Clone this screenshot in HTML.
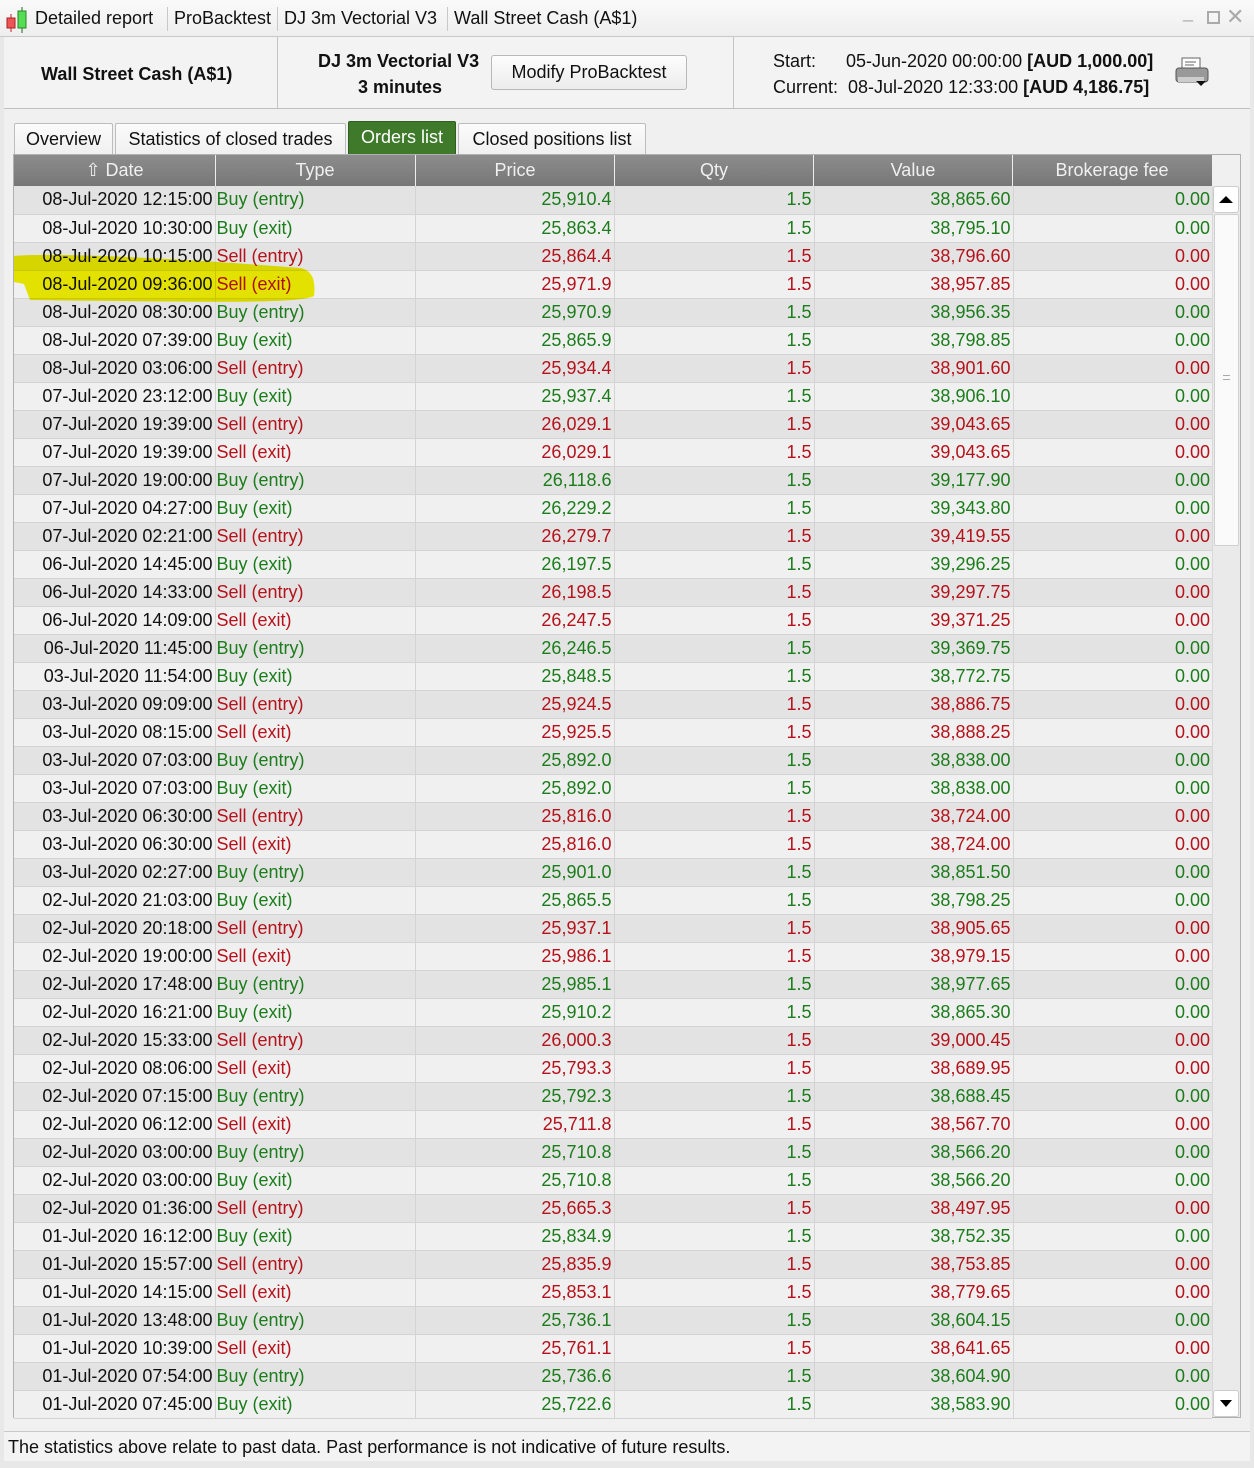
<!DOCTYPE html>
<html><head><meta charset="utf-8"><style>
*{margin:0;padding:0;box-sizing:border-box}
body{width:1254px;height:1468px;overflow:hidden;background:#e8e8e8;font-family:"Liberation Sans",sans-serif;font-size:18px;color:#111;position:relative}
.title{position:absolute;left:0;top:0;width:1254px;height:37px;background:linear-gradient(#fafafa,#eeeeee);border-bottom:1px solid #c8c8c8}
.title span{position:absolute;top:8px;font-size:18px}
.sep{position:absolute;top:7px;width:1px;height:24px;background:#c8c8c8}
.info{position:absolute;left:4px;top:37px;width:1246px;height:72px;background:#f3f3f3;border-bottom:1px solid #c0c0c0}
.vd{position:absolute;top:0;width:1px;height:71px;background:#c4c4c4}
.btn{position:absolute;left:491px;top:55px;width:196px;height:35px;border:1px solid #b8b8b8;border-radius:3px;background:linear-gradient(#fdfdfd,#ececec);text-align:center;line-height:33px}
.main{position:absolute;left:4px;top:109px;width:1246px;height:1322px;background:#f0f0f0}
.tab{position:absolute;top:123px;height:31px;border:1px solid #bdbdbd;border-bottom:none;background:linear-gradient(#fbfbfb,#f0f0f0);line-height:30px;text-align:center;border-radius:2px 2px 0 0}
.tab.on{background:#3e7a2a;color:#fff;border-color:#2f5e20;top:121px;height:33px}
.grid{position:absolute;left:13px;top:154px;width:1228px;height:1264px;border:1px solid #b0b0b0;background:#f0f0f0}
.hdr{position:absolute;left:14px;top:155px;width:1198px;height:31px;background:linear-gradient(#8c8c8c,#777);color:#f0f0f0}
.hdr div{position:absolute;top:0;height:31px;line-height:31px;text-align:center}
.hs{position:absolute;top:7px;width:1px;height:17px;background:#eee}
table{position:absolute;left:14px;top:186px;border-collapse:collapse;table-layout:fixed;width:1198px}
td{height:28px;padding:0 2px 0 0;border-right:1px solid #d4d4d4;border-bottom:1px solid #d4d4d4;text-align:right;white-space:nowrap;overflow:hidden;line-height:27px}
td:nth-child(2){text-align:left;padding-left:1px}
td:last-child{border-right:none}
tr:nth-child(odd) td{background:#e3e3e3}
tr:nth-child(even) td{background:#f0f0f0}
tr.b td:not(:first-child){color:#1b7d1b}
tr.s td:not(:first-child){color:#b5121b}
.sb{position:absolute;left:1212px;top:186px;width:28px;height:1231px;background:#eaeaea;border-left:1px solid #d8d8d8}
.ar{position:absolute;left:1213px;width:26px;height:27px;background:#fff;border:1px solid #ccc;border-radius:3px}
.thumb{position:absolute;left:1214px;top:214px;width:25px;height:332px;background:#fafafa;border:1px solid #d0d0d0;border-radius:2px}
.foot{position:absolute;left:4px;top:1431px;width:1246px;height:30px;background:#f3f3f3;border-top:1px solid #c8c8c8;line-height:30px;padding-left:4px}
.hl{position:absolute;left:0;top:0;mix-blend-mode:multiply;pointer-events:none}
</style></head><body>
<div class="title">
<svg style="position:absolute;left:4px;top:5px" width="28" height="28" viewBox="0 0 28 28"><line x1="7" y1="9" x2="7" y2="27" stroke="#b22"/><rect x="3" y="13" width="8" height="10" fill="#e55" stroke="#a22"/><line x1="18" y1="2" x2="18" y2="28" stroke="#262"/><rect x="14" y="6" width="8" height="17" fill="#5d5" stroke="#282"/></svg>
<span style="left:35px">Detailed report</span><div class="sep" style="left:167px"></div>
<span style="left:174px">ProBacktest</span><div class="sep" style="left:277px"></div>
<span style="left:284px">DJ 3m Vectorial V3</span><div class="sep" style="left:447px"></div>
<span style="left:454px">Wall Street Cash (A$1)</span>
<span style="left:1183px;top:2px;color:#aaa">_</span>
<div style="position:absolute;left:1207px;top:11px;width:13px;height:13px;border:2px solid #aaa"></div>
<span style="left:1226px;top:4px;color:#aaa;font-size:22px">✕</span>
</div>
<div class="info">
<div style="position:absolute;left:37px;top:27px;font-weight:bold">Wall Street Cash (A$1)</div>
<div class="vd" style="left:273px"></div>
<div style="position:absolute;left:314px;top:14px;font-weight:bold">DJ 3m Vectorial V3</div>
<div style="position:absolute;left:354px;top:40px;font-weight:bold">3 minutes</div>
<div class="vd" style="left:729px"></div>
<div style="position:absolute;left:769px;top:14px">Start:&nbsp;&nbsp;&nbsp;&nbsp;&nbsp; 05-Jun-2020 00:00:00 <b>[AUD 1,000.00]</b></div>
<div style="position:absolute;left:769px;top:40px">Current:&nbsp; 08-Jul-2020 12:33:00 <b>[AUD 4,186.75]</b></div>
<svg style="position:absolute;left:1170px;top:20px" width="36" height="32" viewBox="0 0 36 32"><rect x="8" y="1" width="18" height="12" fill="#fff" stroke="#666"/><line x1="11" y1="5" x2="22" y2="5" stroke="#666"/><line x1="11" y1="8" x2="20" y2="8" stroke="#666"/><rect x="2" y="11" width="32" height="14" rx="3" fill="#999" stroke="#555"/><rect x="4" y="20" width="26" height="5" fill="#ccc"/><path d="M22 24h10l-5 5z" fill="#111"/></svg>
</div>
<button class="btn" style="font:18px 'Liberation Sans',sans-serif;color:#111">Modify ProBacktest</button>
<div class="main"></div>
<div class="tab" style="left:14px;width:99px">Overview</div>
<div class="tab" style="left:115px;width:231px">Statistics of closed trades</div>
<div class="tab on" style="left:348px;width:108px">Orders list</div>
<div class="tab" style="left:458px;width:188px">Closed positions list</div>
<div class="grid"></div>
<div class="hdr">
<div style="left:0;width:201px">⇧ Date</div><div class="hs" style="left:201px"></div>
<div style="left:201px;width:200px">Type</div><div class="hs" style="left:401px"></div>
<div style="left:401px;width:200px">Price</div><div class="hs" style="left:600px"></div>
<div style="left:600px;width:200px">Qty</div><div class="hs" style="left:799px"></div>
<div style="left:799px;width:200px">Value</div><div class="hs" style="left:998px"></div>
<div style="left:998px;width:200px">Brokerage fee</div>
</div>
<table>
<colgroup><col style="width:201px"><col style="width:200px"><col style="width:199px"><col style="width:200px"><col style="width:199px"><col style="width:199px"></colgroup>
<tr class="b"><td>08-Jul-2020 12:15:00</td><td>Buy (entry)</td><td>25,910.4</td><td>1.5</td><td>38,865.60</td><td>0.00</td></tr>
<tr class="b"><td>08-Jul-2020 10:30:00</td><td>Buy (exit)</td><td>25,863.4</td><td>1.5</td><td>38,795.10</td><td>0.00</td></tr>
<tr class="s"><td>08-Jul-2020 10:15:00</td><td>Sell (entry)</td><td>25,864.4</td><td>1.5</td><td>38,796.60</td><td>0.00</td></tr>
<tr class="s"><td>08-Jul-2020 09:36:00</td><td>Sell (exit)</td><td>25,971.9</td><td>1.5</td><td>38,957.85</td><td>0.00</td></tr>
<tr class="b"><td>08-Jul-2020 08:30:00</td><td>Buy (entry)</td><td>25,970.9</td><td>1.5</td><td>38,956.35</td><td>0.00</td></tr>
<tr class="b"><td>08-Jul-2020 07:39:00</td><td>Buy (exit)</td><td>25,865.9</td><td>1.5</td><td>38,798.85</td><td>0.00</td></tr>
<tr class="s"><td>08-Jul-2020 03:06:00</td><td>Sell (entry)</td><td>25,934.4</td><td>1.5</td><td>38,901.60</td><td>0.00</td></tr>
<tr class="b"><td>07-Jul-2020 23:12:00</td><td>Buy (exit)</td><td>25,937.4</td><td>1.5</td><td>38,906.10</td><td>0.00</td></tr>
<tr class="s"><td>07-Jul-2020 19:39:00</td><td>Sell (entry)</td><td>26,029.1</td><td>1.5</td><td>39,043.65</td><td>0.00</td></tr>
<tr class="s"><td>07-Jul-2020 19:39:00</td><td>Sell (exit)</td><td>26,029.1</td><td>1.5</td><td>39,043.65</td><td>0.00</td></tr>
<tr class="b"><td>07-Jul-2020 19:00:00</td><td>Buy (entry)</td><td>26,118.6</td><td>1.5</td><td>39,177.90</td><td>0.00</td></tr>
<tr class="b"><td>07-Jul-2020 04:27:00</td><td>Buy (exit)</td><td>26,229.2</td><td>1.5</td><td>39,343.80</td><td>0.00</td></tr>
<tr class="s"><td>07-Jul-2020 02:21:00</td><td>Sell (entry)</td><td>26,279.7</td><td>1.5</td><td>39,419.55</td><td>0.00</td></tr>
<tr class="b"><td>06-Jul-2020 14:45:00</td><td>Buy (exit)</td><td>26,197.5</td><td>1.5</td><td>39,296.25</td><td>0.00</td></tr>
<tr class="s"><td>06-Jul-2020 14:33:00</td><td>Sell (entry)</td><td>26,198.5</td><td>1.5</td><td>39,297.75</td><td>0.00</td></tr>
<tr class="s"><td>06-Jul-2020 14:09:00</td><td>Sell (exit)</td><td>26,247.5</td><td>1.5</td><td>39,371.25</td><td>0.00</td></tr>
<tr class="b"><td>06-Jul-2020 11:45:00</td><td>Buy (entry)</td><td>26,246.5</td><td>1.5</td><td>39,369.75</td><td>0.00</td></tr>
<tr class="b"><td>03-Jul-2020 11:54:00</td><td>Buy (exit)</td><td>25,848.5</td><td>1.5</td><td>38,772.75</td><td>0.00</td></tr>
<tr class="s"><td>03-Jul-2020 09:09:00</td><td>Sell (entry)</td><td>25,924.5</td><td>1.5</td><td>38,886.75</td><td>0.00</td></tr>
<tr class="s"><td>03-Jul-2020 08:15:00</td><td>Sell (exit)</td><td>25,925.5</td><td>1.5</td><td>38,888.25</td><td>0.00</td></tr>
<tr class="b"><td>03-Jul-2020 07:03:00</td><td>Buy (entry)</td><td>25,892.0</td><td>1.5</td><td>38,838.00</td><td>0.00</td></tr>
<tr class="b"><td>03-Jul-2020 07:03:00</td><td>Buy (exit)</td><td>25,892.0</td><td>1.5</td><td>38,838.00</td><td>0.00</td></tr>
<tr class="s"><td>03-Jul-2020 06:30:00</td><td>Sell (entry)</td><td>25,816.0</td><td>1.5</td><td>38,724.00</td><td>0.00</td></tr>
<tr class="s"><td>03-Jul-2020 06:30:00</td><td>Sell (exit)</td><td>25,816.0</td><td>1.5</td><td>38,724.00</td><td>0.00</td></tr>
<tr class="b"><td>03-Jul-2020 02:27:00</td><td>Buy (entry)</td><td>25,901.0</td><td>1.5</td><td>38,851.50</td><td>0.00</td></tr>
<tr class="b"><td>02-Jul-2020 21:03:00</td><td>Buy (exit)</td><td>25,865.5</td><td>1.5</td><td>38,798.25</td><td>0.00</td></tr>
<tr class="s"><td>02-Jul-2020 20:18:00</td><td>Sell (entry)</td><td>25,937.1</td><td>1.5</td><td>38,905.65</td><td>0.00</td></tr>
<tr class="s"><td>02-Jul-2020 19:00:00</td><td>Sell (exit)</td><td>25,986.1</td><td>1.5</td><td>38,979.15</td><td>0.00</td></tr>
<tr class="b"><td>02-Jul-2020 17:48:00</td><td>Buy (entry)</td><td>25,985.1</td><td>1.5</td><td>38,977.65</td><td>0.00</td></tr>
<tr class="b"><td>02-Jul-2020 16:21:00</td><td>Buy (exit)</td><td>25,910.2</td><td>1.5</td><td>38,865.30</td><td>0.00</td></tr>
<tr class="s"><td>02-Jul-2020 15:33:00</td><td>Sell (entry)</td><td>26,000.3</td><td>1.5</td><td>39,000.45</td><td>0.00</td></tr>
<tr class="s"><td>02-Jul-2020 08:06:00</td><td>Sell (exit)</td><td>25,793.3</td><td>1.5</td><td>38,689.95</td><td>0.00</td></tr>
<tr class="b"><td>02-Jul-2020 07:15:00</td><td>Buy (entry)</td><td>25,792.3</td><td>1.5</td><td>38,688.45</td><td>0.00</td></tr>
<tr class="s"><td>02-Jul-2020 06:12:00</td><td>Sell (exit)</td><td>25,711.8</td><td>1.5</td><td>38,567.70</td><td>0.00</td></tr>
<tr class="b"><td>02-Jul-2020 03:00:00</td><td>Buy (entry)</td><td>25,710.8</td><td>1.5</td><td>38,566.20</td><td>0.00</td></tr>
<tr class="b"><td>02-Jul-2020 03:00:00</td><td>Buy (exit)</td><td>25,710.8</td><td>1.5</td><td>38,566.20</td><td>0.00</td></tr>
<tr class="s"><td>02-Jul-2020 01:36:00</td><td>Sell (entry)</td><td>25,665.3</td><td>1.5</td><td>38,497.95</td><td>0.00</td></tr>
<tr class="b"><td>01-Jul-2020 16:12:00</td><td>Buy (exit)</td><td>25,834.9</td><td>1.5</td><td>38,752.35</td><td>0.00</td></tr>
<tr class="s"><td>01-Jul-2020 15:57:00</td><td>Sell (entry)</td><td>25,835.9</td><td>1.5</td><td>38,753.85</td><td>0.00</td></tr>
<tr class="s"><td>01-Jul-2020 14:15:00</td><td>Sell (exit)</td><td>25,853.1</td><td>1.5</td><td>38,779.65</td><td>0.00</td></tr>
<tr class="b"><td>01-Jul-2020 13:48:00</td><td>Buy (entry)</td><td>25,736.1</td><td>1.5</td><td>38,604.15</td><td>0.00</td></tr>
<tr class="s"><td>01-Jul-2020 10:39:00</td><td>Sell (exit)</td><td>25,761.1</td><td>1.5</td><td>38,641.65</td><td>0.00</td></tr>
<tr class="b"><td>01-Jul-2020 07:54:00</td><td>Buy (entry)</td><td>25,736.6</td><td>1.5</td><td>38,604.90</td><td>0.00</td></tr>
<tr class="b"><td>01-Jul-2020 07:45:00</td><td>Buy (exit)</td><td>25,722.6</td><td>1.5</td><td>38,583.90</td><td>0.00</td></tr>
</table>
<svg class="hl" width="1254" height="1468"><path d="M14 256 C60 252 200 260 300 268 C312 270 316 280 314 296 C300 304 200 302 30 300 L24 284 L14 282 Z" fill="#f2f000"/></svg>
<div class="sb"></div>
<div class="ar" style="top:186px"><svg width="24" height="25" viewBox="0 0 24 25"><path d="M5 16h14l-7-7z" fill="#000"/></svg></div>
<div class="thumb"><div style="position:absolute;left:8px;top:160px;width:7px;height:5px;border-top:1px solid #aaa;border-bottom:1px solid #aaa"></div></div>
<div class="ar" style="top:1390px"><svg width="24" height="25" viewBox="0 0 24 25"><path d="M6 9h12l-6 7z" fill="#000"/></svg></div>
<div class="foot">The statistics above relate to past data. Past performance is not indicative of future results.</div>
</body></html>
